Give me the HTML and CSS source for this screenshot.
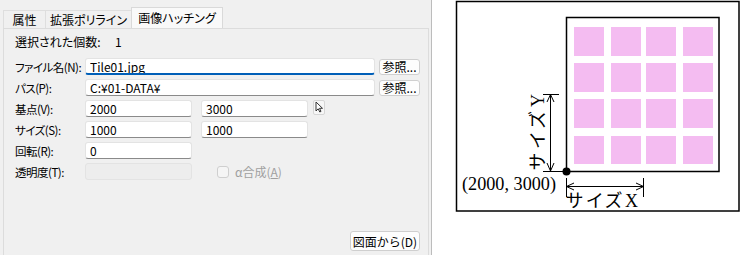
FILE: index.html
```html
<!DOCTYPE html>
<html lang="ja">
<head>
  <meta charset="UTF-8">
  <title>画像ハッチング</title>
  <link rel="stylesheet" href="styles.css">
</head>
<body>
  <div class="screen">

    <!-- Dialog -->
    <div class="dialog">
      <div class="tabs">
        <div class="tab tab-attr">属性</div>
        <div class="tab tab-poly">拡張ポリライン</div>
        <div class="tab tab-hatch active">画像ハッチング</div>
      </div>

      <div class="panel">
        <div class="count">
          <span class="count-label">選択された個数:</span>
          <span>1</span>
        </div>

        <div class="row">
          <label class="row-label">ファイル名(N):</label>
          <input type="text" class="field wide focus" value="Tile01.jpg">
          <button class="ref-btn">参照...</button>
        </div>

        <div class="row">
          <label class="row-label">パス(P):</label>
          <input type="text" class="field wide" value="C:¥01-DATA¥">
          <button class="ref-btn">参照...</button>
        </div>

        <div class="row">
          <label class="row-label">基点(V):</label>
          <input type="text" class="field short" value="2000">
          <input type="text" class="field short" value="3000">
          <button class="pick-btn">
            <svg width="9" height="12" viewBox="0 0 9 12">
              <path d="M1 1 L1 10 L3.2 7.8 L4.8 11 L6 10.4 L4.5 7.3 L7.5 7.3 Z" fill="#fff" stroke="#333" stroke-width="1" stroke-linejoin="round"/>
            </svg>
          </button>
        </div>

        <div class="row">
          <label class="row-label">サイズ(S):</label>
          <input type="text" class="field short" value="1000">
          <input type="text" class="field short" value="1000">
        </div>

        <div class="row">
          <label class="row-label">回転(R):</label>
          <input type="text" class="field short" value="0">
        </div>

        <div class="row">
          <label class="row-label">透明度(T):</label>
          <input type="text" class="field short" disabled>
          <div class="alpha">
            <span class="check"></span>
            <span class="alpha-text">α合成(<u>A</u>)</span>
          </div>
        </div>

        <div class="footer">
          <button class="from-btn">図面から(D)</button>
        </div>
      </div>
    </div>

    <!-- Figure -->
    <div class="figure">
      <svg width="318" height="255" viewBox="432 0 318 255">
        <rect x="456.5" y="1.5" width="282.5" height="209.5" fill="none" stroke="#000" stroke-width="1.5"/>
        <rect x="566.5" y="17.5" width="152.5" height="154" fill="none" stroke="#000" stroke-width="1.5"/>

        <g fill="#f4bcf1">
          <rect x="574" y="27" width="30" height="29"/>
          <rect x="611" y="27" width="30" height="29"/>
          <rect x="646" y="27" width="30" height="29"/>
          <rect x="683" y="27" width="30" height="29"/>
          <rect x="574" y="63" width="30" height="29"/>
          <rect x="611" y="63" width="30" height="29"/>
          <rect x="646" y="63" width="30" height="29"/>
          <rect x="683" y="63" width="30" height="29"/>
          <rect x="574" y="99" width="30" height="29"/>
          <rect x="611" y="99" width="30" height="29"/>
          <rect x="646" y="99" width="30" height="29"/>
          <rect x="683" y="99" width="30" height="29"/>
          <rect x="574" y="136" width="30" height="28"/>
          <rect x="611" y="136" width="30" height="28"/>
          <rect x="646" y="136" width="30" height="28"/>
          <rect x="683" y="136" width="30" height="28"/>
        </g>

        <g stroke="#000" stroke-width="1" fill="none">
          <!-- size Y -->
          <line x1="550.5" y1="94" x2="550.5" y2="171"/>
          <line x1="543" y1="94.5" x2="559" y2="94.5"/>
          <line x1="543" y1="171.5" x2="566" y2="171.5"/>
          <polyline points="547,102 550.5,94.5 554,102"/>
          <polyline points="547,163 550.5,171 554,163"/>
          <!-- size X -->
          <line x1="566" y1="186.5" x2="643" y2="186.5"/>
          <line x1="566.5" y1="178" x2="566.5" y2="197"/>
          <line x1="643.5" y1="178" x2="643.5" y2="197"/>
          <polyline points="574,183 566.5,186.5 574,190"/>
          <polyline points="636,183 643.5,186.5 636,190"/>
        </g>

        <circle cx="566.5" cy="171.5" r="4" fill="#000"/>

        <g class="fig-text">
          <text transform="translate(544 170) rotate(-90)" textLength="76" lengthAdjust="spacing">サイズY</text>
          <text x="462" y="190" textLength="94" lengthAdjust="spacingAndGlyphs">(2000, 3000)</text>
          <text x="566" y="207" textLength="72" lengthAdjust="spacing">サイズX</text>
        </g>
      </svg>
    </div>

  </div>
</body>
</html>
```

FILE: styles.css
```css
body {
    margin: 0;
    font-family: "Noto Sans CJK JP", sans-serif;
    font-size: 12px;
    font-feature-settings: "palt";
    color: #000;
}

.screen {
    display: flex;
    width: 750px;
    height: 255px;
    overflow: hidden;
}

.dialog {
    width: 431px;
    height: 262px;
    flex-shrink: 0;
    background: #f0f0f0;
    border-right: 1px solid #bcbcbc;
    display: flex;
    flex-direction: column;
}

/* Tabs */
.tabs {
    display: flex;
    align-items: flex-end;
    height: 28px;
    padding-left: 3px;
}

.tab {
    box-sizing: border-box;
    height: 18px;
    line-height: 17px;
    text-align: center;
    border: 1px solid #dedede;
    border-bottom: none;
    margin-right: -1px;
}

.tab-attr { width: 43px; }
.tab-poly { width: 87px; }
.tab-hatch { width: 92px; }

.tab.active {
    height: 21px;
    line-height: 20px;
    background: #f9f9f9;
    border-color: #d9d9d9;
}

/* Panel */
.panel {
    flex: 1;
    margin: 0 2px 0 3px;
    border: 1px solid #dcdcdc;
    padding: 5px 0 0 11px;
    display: flex;
    flex-direction: column;
}

.count {
    display: flex;
    height: 16px;
    line-height: 16px;
    margin-bottom: 4px;
}

.count-label {
    width: 100px;
}

.row {
    display: flex;
    align-items: center;
    height: 17px;
    margin-top: 4px;
}

.row-label {
    width: 70px;
    flex-shrink: 0;
    white-space: nowrap;
    font-size: 11.5px;
    letter-spacing: -0.5px;
}

.field {
    box-sizing: border-box;
    height: 17px;
    margin: 0;
    padding: 0 4px;
    border: 1px solid #e3e3e3;
    border-bottom-color: #8a8a8a;
    border-radius: 3px;
    background: #fff;
    font-family: inherit;
    font-size: 12px;
    font-feature-settings: "palt";
    color: #000;
    outline: none;
}

.field.wide { width: 290px; }

.field.short {
    width: 107px;
    margin-right: 9px;
}

.field.focus {
    border-bottom: 2px solid #005fb8;
}

.field:disabled {
    background: #ededed;
    border-color: #e3e3e3;
}

.ref-btn {
    box-sizing: border-box;
    width: 41px;
    height: 16px;
    margin-left: 4px;
    padding: 0;
    border: 1px solid #cfcfcf;
    border-radius: 3px;
    background: #fdfdfd;
    font-family: inherit;
    font-size: 12px;
    line-height: 13px;
    color: #000;
}

.pick-btn {
    box-sizing: border-box;
    width: 12px;
    height: 15px;
    margin-left: -4px;
    margin-top: -3px;
    padding: 0;
    border: 1px solid #d6d6d6;
    border-radius: 2px;
    background: #f7f7f7;
    display: flex;
    align-items: center;
    justify-content: center;
}

.alpha {
    display: flex;
    align-items: center;
    margin-left: 16px;
    color: #a0a0a0;
}

.check {
    box-sizing: border-box;
    width: 12px;
    height: 12px;
    border: 1px solid #cfcfcf;
    border-radius: 3px;
    background: #f5f5f5;
    margin-right: 6px;
}

.footer {
    margin-top: auto;
    margin-bottom: 10px;
    margin-right: 8px;
    display: flex;
    justify-content: flex-end;
}

.from-btn {
    box-sizing: border-box;
    width: 70px;
    height: 20px;
    padding: 0;
    border: 1px solid #cfcfcf;
    border-radius: 3px;
    background: #fdfdfd;
    font-family: inherit;
    font-size: 12px;
    color: #000;
}

/* Figure */
.figure {
    flex: 1;
    background: #fff;
}

.fig-text {
    font-family: "Liberation Serif", "Noto Sans CJK JP", serif;
    font-size: 18px;
    fill: #000;
}
```
